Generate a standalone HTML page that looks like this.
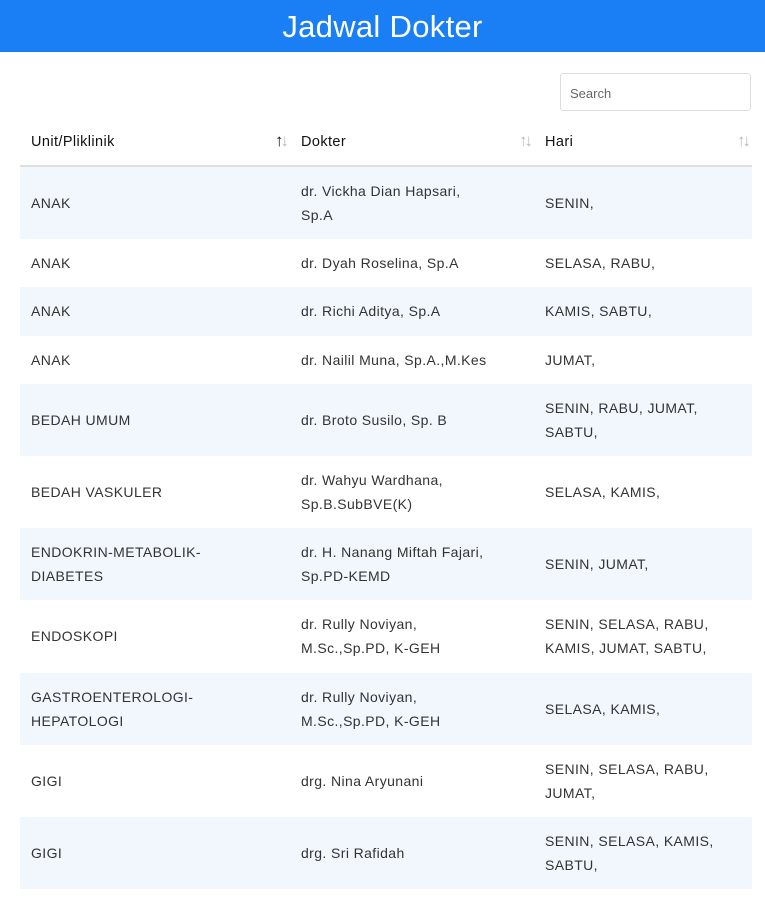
<!DOCTYPE html>
<html><head><meta charset="utf-8"><style>
body{margin:0;background:#fff;font-family:"Liberation Sans",sans-serif;width:765px;height:900px;overflow:hidden}
.hd{height:52px;background:#1a7ef5;color:#fff;text-align:center;font-size:31px;line-height:54px;letter-spacing:0.3px;font-weight:500}
.card{position:relative;background:#fff;border-top-left-radius:6px;border-top-right-radius:6px}
.search{position:absolute;left:560px;top:21px;width:191px;height:38px;border:1px solid #ddd;border-radius:3px;box-sizing:border-box;font-size:13px;color:#666;padding:12px 9px}
table{position:absolute;left:20px;top:67px;width:732px;border-collapse:collapse;font-size:14px;color:#333;letter-spacing:0.4px}
th{text-align:left;font-weight:normal;color:#111;height:46px;padding:0 11px;border-bottom:2px solid #ddd;position:relative;font-size:14.5px}
th span{position:absolute;right:4px;top:12px;color:#bbb;font-size:17px;letter-spacing:-3px}
th span b{color:#111;font-weight:bold}
td{padding:12.1px 11px;line-height:24px;vertical-align:middle}
tr:nth-child(odd) td{background:#f1f7fd}
</style></head><body>
<div class="hd">Jadwal Dokter</div>
<div class="card">
<div class="search">Search</div>
<table>
<colgroup><col style="width:270px"><col style="width:244px"><col></colgroup>
<thead><tr><th>Unit/Pliklinik<span><b>↑</b>↓</span></th><th>Dokter<span>↑↓</span></th><th>Hari<span>↑↓</span></th></tr></thead>
<tbody>
<tr><td>ANAK</td><td>dr. Vickha Dian Hapsari,<br>Sp.A</td><td>SENIN,</td></tr>
<tr><td>ANAK</td><td>dr. Dyah Roselina, Sp.A</td><td>SELASA, RABU,</td></tr>
<tr><td>ANAK</td><td>dr. Richi Aditya, Sp.A</td><td>KAMIS, SABTU,</td></tr>
<tr><td>ANAK</td><td>dr. Nailil Muna, Sp.A.,M.Kes</td><td>JUMAT,</td></tr>
<tr><td>BEDAH UMUM</td><td>dr. Broto Susilo, Sp. B</td><td>SENIN, RABU, JUMAT,<br>SABTU,</td></tr>
<tr><td>BEDAH VASKULER</td><td>dr. Wahyu Wardhana,<br>Sp.B.SubBVE(K)</td><td>SELASA, KAMIS,</td></tr>
<tr><td>ENDOKRIN-METABOLIK-<br>DIABETES</td><td>dr. H. Nanang Miftah Fajari,<br>Sp.PD-KEMD</td><td>SENIN, JUMAT,</td></tr>
<tr><td>ENDOSKOPI</td><td>dr. Rully Noviyan,<br>M.Sc.,Sp.PD, K-GEH</td><td>SENIN, SELASA, RABU,<br>KAMIS, JUMAT, SABTU,</td></tr>
<tr><td>GASTROENTEROLOGI-<br>HEPATOLOGI</td><td>dr. Rully Noviyan,<br>M.Sc.,Sp.PD, K-GEH</td><td>SELASA, KAMIS,</td></tr>
<tr><td>GIGI</td><td>drg. Nina Aryunani</td><td>SENIN, SELASA, RABU,<br>JUMAT,</td></tr>
<tr><td>GIGI</td><td>drg. Sri Rafidah</td><td>SENIN, SELASA, KAMIS,<br>SABTU,</td></tr>
</tbody></table>
</div>
</body></html>
